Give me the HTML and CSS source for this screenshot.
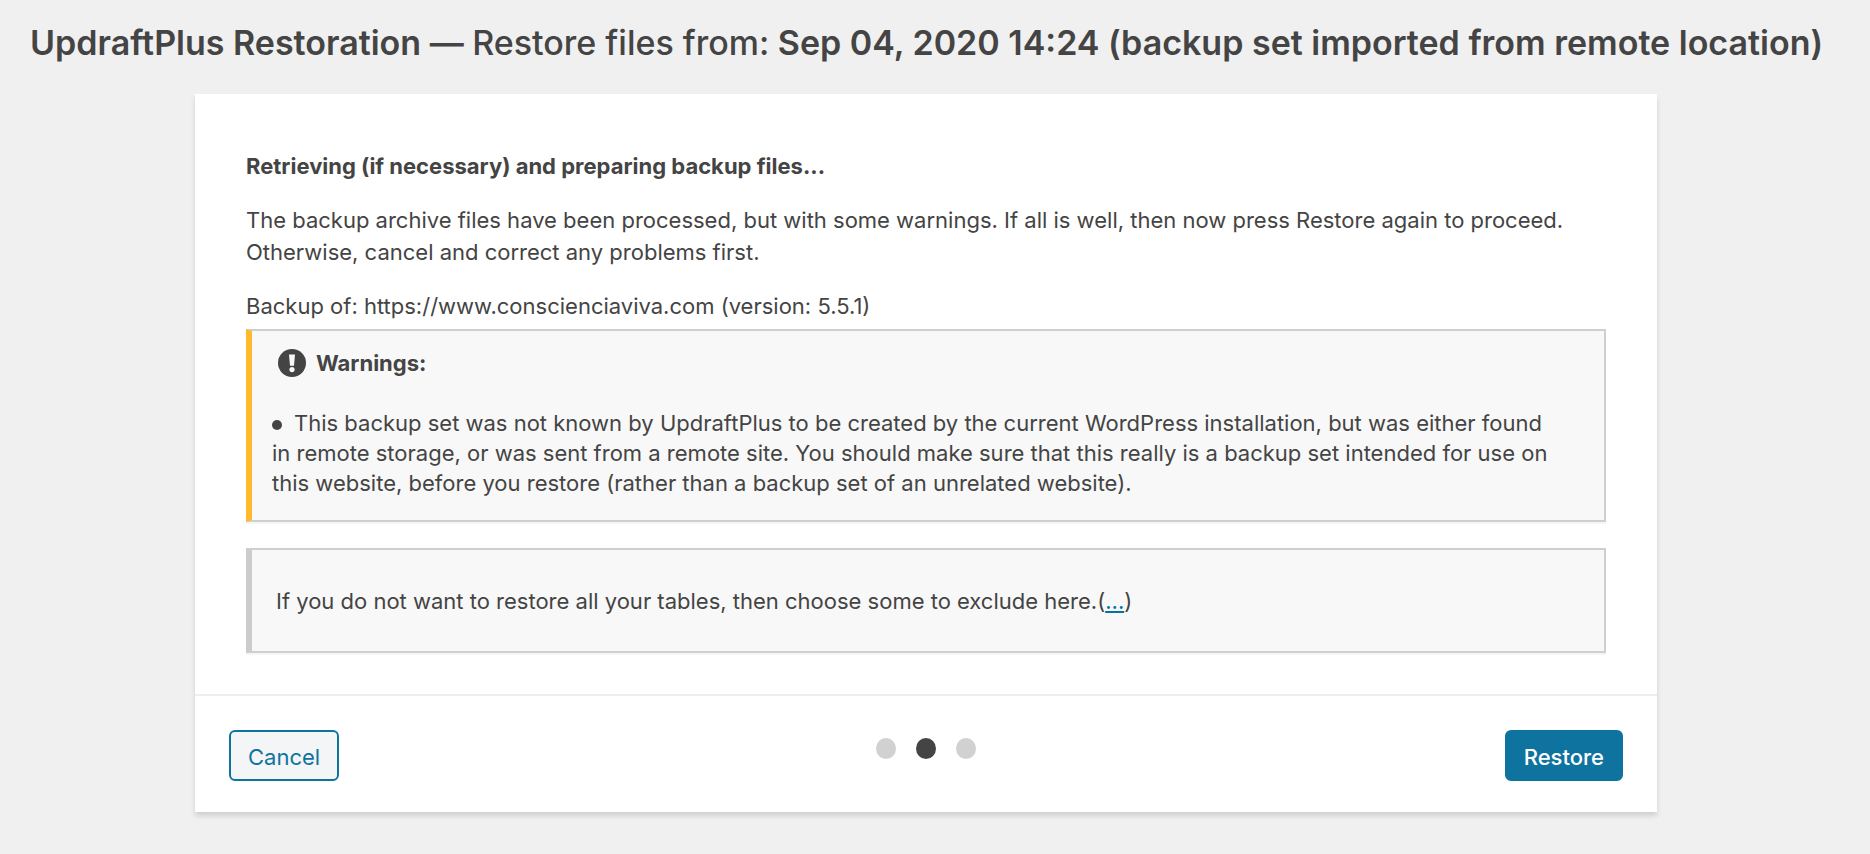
FILE: index.html
```
<!DOCTYPE html>
<html lang="en">
<head>
    <meta charset="UTF-8">
    <meta name="viewport" content="width=device-width, initial-scale=1.0">
    <title>UpdraftPlus Restoration</title>
    <link rel="stylesheet" href="styles.css">
</head>
<body>
    <h1 class="page-title">UpdraftPlus Restoration — <span class="title-light">Restore files from:</span> Sep 04, 2020 14:24 (backup set imported from remote location)</h1>
    <div class="wrap">
        <form class="restore-card">
            <div class="restore-main">
                <h2 class="restore-heading">Retrieving (if necessary) and preparing backup files...</h2>
                <p>The backup archive files have been processed, but with some warnings. If all is well, then now press Restore again to proceed. Otherwise, cancel and correct any problems first.</p>
                <p>Backup of: https://www.conscienciaviva.com (version: 5.5.1)</p>
                <div class="notice notice-warning">
                    <h3 class="notice-title">
                        <svg class="notice-icon" viewBox="0 0 28 28" aria-hidden="true">
                            <circle cx="14" cy="14" r="14" fill="#444"/>
                            <path d="M11 5.4h6l-1 11.4h-4z" fill="#f8f8f8"/>
                            <circle cx="14" cy="20.6" r="2.6" fill="#f8f8f8"/>
                        </svg>
                        Warnings:
                    </h3>
                    <ul class="notice-list">
                        <li>This backup set was not known by UpdraftPlus to be created by the current WordPress installation, but was either found in remote storage, or was sent from a remote site. You should make sure that this really is a backup set intended for use on this website, before you restore (rather than a backup set of an unrelated website).</li>
                    </ul>
                </div>
                <div class="notice notice-tables">
                    If you do not want to restore all your tables, then choose some to exclude here.(<a href="#">...</a>)
                </div>
            </div>
            <div class="restore-footer">
                <button class="button" type="button">Cancel</button>
                <div class="steps">
                    <span class="step"></span>
                    <span class="step active"></span>
                    <span class="step"></span>
                </div>
                <button class="button button-primary" type="submit">Restore</button>
            </div>
        </form>
    </div>
</body>
</html>
```

FILE: styles.css
```
* {
    box-sizing: border-box;
}
body {
    margin: 0;
    background: #f0f0f0;
    color: #444;
    font-family: Inter, "Noto Sans", sans-serif;
    font-size: 22px;
    line-height: 32px;
}
.wrap {
    padding: 0 48px 40px 30px;
}
.page-title {
    margin: 0;
    padding: 20px 20px 28px 30px;
    font-size: 34px;
    font-weight: 600;
    line-height: 46px;
}
.title-light {
    font-weight: 500;
}
.restore-card {
    max-width: 1462px;
    margin: 0 auto;
    background: #fff;
    box-shadow: 0 4px 5px rgba(0,0,0,0.13);
}
.restore-main {
    padding: 56px 51px 41px;
}
.restore-heading {
    margin: 0;
    font-size: 22px;
    font-weight: 700;
}
.restore-main p {
    margin: 22px 0 0;
}
.notice {
    background: #f8f8f8;
    border: 2px solid #ccd0d4;
    border-left: 6px solid #ccc;
    box-shadow: 0 2px 0 rgba(0,0,0,0.04);
}
.restore-main .notice-warning {
    margin-top: 7px;
    padding: 16px 38px 22px 20px;
    border-left-color: #ffb92c;
}
.notice-title {
    display: flex;
    align-items: center;
    gap: 10px;
    margin: 0 0 29px 6px;
    font-size: 22px;
    font-weight: 700;
}
.notice-icon {
    width: 28px;
    height: 28px;
}
.notice-list {
    margin: 0;
    padding: 0;
    list-style: none;
    line-height: 30px;
}
.notice-list li::before {
    content: "";
    display: inline-block;
    width: 10px;
    height: 10px;
    margin-right: 12px;
    border-radius: 50%;
    background: #444;
    vertical-align: 1px;
}
.notice-tables {
    margin-top: 26px;
    padding: 35px 24px 34px;
}
.notice a {
    color: #0073aa;
}
.restore-footer {
    display: grid;
    grid-template-columns: 1fr auto 1fr;
    align-items: start;
    padding: 34px 34px 31px;
    border-top: 2px solid #eee;
}
.button {
    justify-self: start;
    height: 51px;
    padding: 2px 17px 0;
    border: 2px solid #0f73a0;
    border-radius: 6px;
    background: #f3f5f6;
    color: #0f73a0;
    font-family: inherit;
    font-size: 22px;
    cursor: pointer;
}
.button-primary {
    justify-self: end;
    background: #0f73a0;
    color: #fff;
    font-weight: 500;
}
.steps {
    display: flex;
    gap: 20px;
    padding-top: 8px;
}
.step {
    width: 20px;
    height: 21px;
    border-radius: 50%;
    background: #d1d1d1;
}
.step.active {
    background: #444;
}
```
